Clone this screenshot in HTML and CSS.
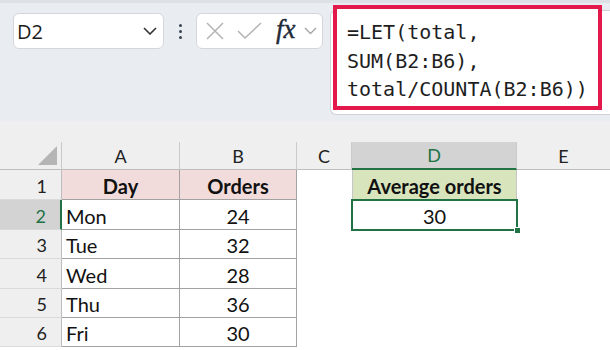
FILE: index.html
```html
<!DOCTYPE html>
<html lang="en">
<head>
    <meta charset="UTF-8">
    <meta name="viewport" content="width=device-width, initial-scale=1.0">
    <title>LET formula</title>
    <link rel="stylesheet" href="styles.css">
</head>
<body>
    <div class="formula-bar">
        <div class="name-box">
            <span class="name-text">D2</span>
            <svg class="chev" width="14" height="8" viewBox="0 0 14 8"><polyline points="1,1 7,7 13,1" fill="none" stroke="#333" stroke-width="1.6"/></svg>
        </div>
        <div class="dots"><span></span><span></span><span></span></div>
        <div class="fx-box">
            <svg class="ico" width="20" height="20" viewBox="0 0 20 20"><path d="M2 2 L18 18 M18 2 L2 18" stroke="#b3b3b3" stroke-width="1.5" fill="none"/></svg>
            <svg class="ico" width="25" height="20" viewBox="0 0 25 20"><polyline points="1,10 8,17 24,2" stroke="#b3b3b3" stroke-width="1.5" fill="none"/></svg>
            <span class="fx">fx</span>
            <svg class="chev-s" width="13" height="8" viewBox="0 0 13 8"><polyline points="1,1 6.5,6.5 12,1" fill="none" stroke="#a6a6a6" stroke-width="1.4"/></svg>
        </div>
        <div class="formula-wrap">
            <div class="formula-box">
                <div>=LET(total,</div>
                <div>SUM(B2:B6),</div>
                <div>total/COUNTA(B2:B6))</div>
            </div>
        </div>
    </div>

    <div class="gap"></div>

    <div class="sheet">
        <div class="hd corner"><span class="tri"></span></div>
        <div class="hd col">A</div>
        <div class="hd col">B</div>
        <div class="hd col">C</div>
        <div class="hd col sel">D</div>
        <div class="hd col last">E</div>

        <div class="hd row">1</div>
        <div class="cell t head">Day</div>
        <div class="cell t head c">Orders</div>
        <div class="cell"></div>
        <div class="cell avg-head">Average orders</div>
        <div class="cell"></div>

        <div class="hd row sel">2</div>
        <div class="cell t">Mon</div>
        <div class="cell t c">24</div>
        <div class="cell"></div>
        <div class="cell active">30<span class="handle"></span></div>
        <div class="cell"></div>

        <div class="hd row">3</div>
        <div class="cell t">Tue</div>
        <div class="cell t c">32</div>
        <div class="cell"></div>
        <div class="cell"></div>
        <div class="cell"></div>

        <div class="hd row">4</div>
        <div class="cell t">Wed</div>
        <div class="cell t c">28</div>
        <div class="cell"></div>
        <div class="cell"></div>
        <div class="cell"></div>

        <div class="hd row">5</div>
        <div class="cell t">Thu</div>
        <div class="cell t c">36</div>
        <div class="cell"></div>
        <div class="cell"></div>
        <div class="cell"></div>

        <div class="hd row">6</div>
        <div class="cell t">Fri</div>
        <div class="cell t c">30</div>
        <div class="cell"></div>
        <div class="cell"></div>
        <div class="cell"></div>
    </div>
</body>
</html>
```

FILE: styles.css
```css
* {
    margin: 0;
    padding: 0;
    box-sizing: border-box;
}

body {
    width: 610px;
    height: 350px;
    overflow: hidden;
    background-color: #fff;
    font-family: 'Lato', sans-serif;
}

/* formula bar */
.formula-bar {
    height: 121px;
    background-color: #e9edf1;
    border-top: 3px solid #dde1e5;
    display: flex;
    align-items: flex-start;
    padding-left: 13px;
}

.name-box {
    width: 151px;
    height: 36px;
    margin-top: 10px;
    background-color: #fff;
    border: 1px solid #d3d7db;
    border-radius: 6px;
    display: flex;
    align-items: center;
    justify-content: space-between;
    padding: 0 6px 0 3px;
}

.name-text {
    font-family: 'Open Sans', sans-serif;
    font-size: 20px;
    color: #1b1b1b;
}

.dots {
    width: 32px;
    height: 36px;
    margin-top: 10px;
    display: flex;
    flex-direction: column;
    align-items: center;
    justify-content: center;
    gap: 3px;
}

.dots span {
    width: 3px;
    height: 3px;
    border-radius: 50%;
    background-color: #3a4350;
}

.fx-box {
    width: 127px;
    height: 36px;
    margin-top: 10px;
    background-color: #fff;
    border: 1px solid #d3d7db;
    border-radius: 6px;
    display: flex;
    align-items: center;
    padding-left: 8px;
}

.ico {
    margin-right: 12px;
}

.fx {
    font-family: 'Liberation Serif', serif;
    font-style: italic;
    font-size: 27px;
    line-height: 1;
    color: #1f2a38;
    margin-left: 2px;
    margin-right: 8px;
    margin-top: -3px;
    -webkit-text-stroke: 0.4px #1f2a38;
}

.formula-wrap {
    position: relative;
    flex: 1;
    height: 105px;
    margin-top: 7px;
    margin-left: 7px;
    background-color: #fff;
    border: 1px solid #cfd3d8;
    border-right: none;
    border-radius: 6px 0 0 6px;
}

/* red highlight drawn over the formula input */
.formula-box {
    position: absolute;
    left: 2px;
    top: -6px;
    width: 269px;
    height: 105px;
    border: 4px solid #e3194b;
    background-color: #fff;
    padding: 9px 0 0 10px;
    font-family: 'DejaVu Sans Mono', monospace;
    font-size: 20px;
    line-height: 28.5px;
    color: #1e1e1e;
}

.gap {
    height: 21px;
    background-color: #efefef;
}

/* grid */
.sheet {
    display: grid;
    grid-template-columns: 62px 118px 117px 55px 165px 93px;
    grid-template-rows: 28px 30px 30px 29px 30px 29px 29px;
}

.hd {
    background-color: #efefef;
    font-size: 18px;
    color: #222;
    display: flex;
    align-items: center;
}

.corner {
    position: relative;
    border-right: 1px solid #c9c9c9;
    border-bottom: 1px solid #bdbdbd;
}

.tri {
    position: absolute;
    right: 4px;
    bottom: 4px;
    width: 0;
    height: 0;
    border-left: 19px solid transparent;
    border-bottom: 19px solid #b5b5b5;
}

.col {
    justify-content: center;
    border-right: 1px solid #cbcbcb;
    border-bottom: 1px solid #bdbdbd;
}

.col.last {
    border-right: none;
}

.col.sel {
    background-color: #d3d3d3;
    color: #217346;
    border-bottom: 2px solid #217346;
}

.row {
    justify-content: flex-end;
    padding-right: 14px;
    padding-top: 2px;
    border-right: 1px solid #bdbdbd;
    border-bottom: 1px solid #dadada;
}

.row.sel {
    background-color: #d3d3d3;
    color: #217346;
    border-right: 2px solid #217346;
}

.cell {
    position: relative;
    font-size: 20px;
    color: #111;
    display: flex;
    align-items: center;
    padding: 2px 4px 0;
}

.cell.t {
    border-right: 1px solid #a2a2a2;
    border-bottom: 1px solid #a2a2a2;
}

.cell.c {
    justify-content: center;
}

.cell.head {
    background-color: #f2dcdb;
    font-weight: bold;
    justify-content: center;
}

.avg-head {
    background-color: #d8e4bc;
    font-weight: bold;
    justify-content: center;
    border-left: 1px solid #c6c6c6;
    border-right: 1px solid #c6c6c6;
}

.active {
    justify-content: center;
    outline: 2px solid #217346;
    outline-offset: -1px;
}

.handle {
    position: absolute;
    right: -4px;
    bottom: -4px;
    width: 7px;
    height: 7px;
    background-color: #217346;
    border: 1px solid #fff;
}
```
